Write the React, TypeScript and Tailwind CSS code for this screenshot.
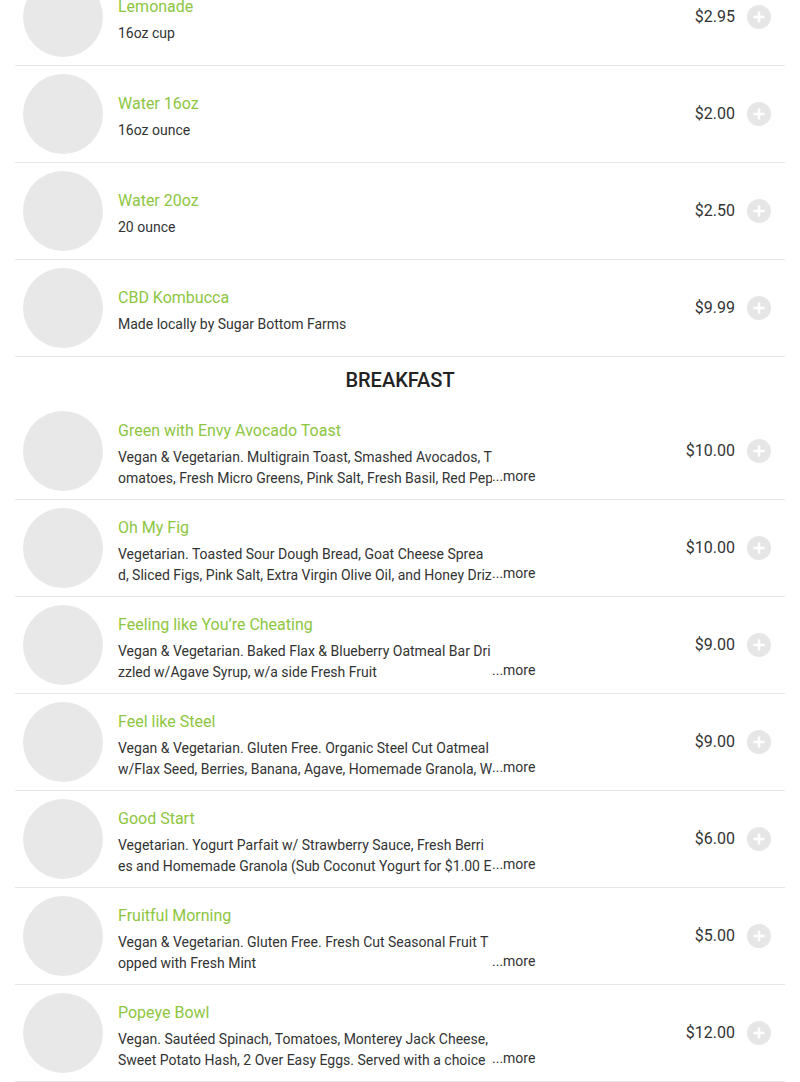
import React from "react";

type Item = { name: string; lines: string[]; price: string; more?: boolean };

const drinks: Item[] = [
  { name: "Lemonade", lines: ["16oz cup"], price: "$2.95" },
  { name: "Water 16oz", lines: ["16oz ounce"], price: "$2.00" },
  { name: "Water 20oz", lines: ["20 ounce"], price: "$2.50" },
  { name: "CBD Kombucca", lines: ["Made locally by Sugar Bottom Farms"], price: "$9.99" },
];

const breakfast: Item[] = [
  {
    name: "Green with Envy Avocado Toast",
    lines: [
      "Vegan & Vegetarian. Multigrain Toast, Smashed Avocados, T",
      "omatoes, Fresh Micro Greens, Pink Salt, Fresh Basil, Red Pep",
    ],
    price: "$10.00",
    more: true,
  },
  {
    name: "Oh My Fig",
    lines: [
      "Vegetarian. Toasted Sour Dough Bread, Goat Cheese Sprea",
      "d, Sliced Figs, Pink Salt, Extra Virgin Olive Oil, and Honey Driz",
    ],
    price: "$10.00",
    more: true,
  },
  {
    name: "Feeling like You\u2019re Cheating",
    lines: [
      "Vegan & Vegetarian. Baked Flax & Blueberry Oatmeal Bar Dri",
      "zzled w/Agave Syrup, w/a side Fresh Fruit",
    ],
    price: "$9.00",
    more: true,
  },
  {
    name: "Feel like Steel",
    lines: [
      "Vegan & Vegetarian. Gluten Free. Organic Steel Cut Oatmeal",
      "w/Flax Seed, Berries, Banana, Agave, Homemade Granola, W",
    ],
    price: "$9.00",
    more: true,
  },
  {
    name: "Good Start",
    lines: [
      "Vegetarian. Yogurt Parfait w/ Strawberry Sauce, Fresh Berri",
      "es and Homemade Granola (Sub Coconut Yogurt for $1.00 E",
    ],
    price: "$6.00",
    more: true,
  },
  {
    name: "Fruitful Morning",
    lines: [
      "Vegan & Vegetarian. Gluten Free. Fresh Cut Seasonal Fruit T",
      "opped with Fresh Mint",
    ],
    price: "$5.00",
    more: true,
  },
  {
    name: "Popeye Bowl",
    lines: [
      "Vegan. Saut\u00e9ed Spinach, Tomatoes, Monterey Jack Cheese,",
      "Sweet Potato Hash, 2 Over Easy Eggs. Served with a choice",
    ],
    price: "$12.00",
    more: true,
  },
];

function PlusButton() {
  return (
    <div className="w-[24px] h-[24px] rounded-full bg-[#e6e6e6] flex items-center justify-center">
      <svg width="14" height="14" viewBox="0 0 14 14">
        <path d="M7 1.5v11M1.5 7h11" stroke="#ffffff" strokeWidth="2.4" strokeLinecap="butt" />
      </svg>
    </div>
  );
}

function Row({ item }: { item: Item }) {
  return (
    <div className="flex items-center h-[97px] border-b border-[#e6e6e6] pl-[8px] pr-[14px]">
      <div className="w-[80px] h-[80px] rounded-full bg-[#e8e8e8] shrink-0" />
      <div className={"ml-[15px] self-stretch flex flex-col " + (item.more ? "pt-[18px]" : "pt-[28px]")}>
        <div className="text-[16px] leading-[20px] text-[#8dc63f]">{item.name}</div>
        {item.more ? (
          <div className="flex items-end mt-[6px]">
            <div className="w-[374px] overflow-hidden text-[14px] leading-[21px] text-[#333333]">
              {item.lines.map((l, i) => (
                <div key={i} className="whitespace-nowrap">
                  {l}
                </div>
              ))}
            </div>
            <span className="mb-[2px] text-[14px] leading-[21px] text-[#333333] whitespace-nowrap">...more</span>
          </div>
        ) : (
          <div className="mt-[6px] text-[14px] leading-[21px] text-[#333333]">{item.lines[0]}</div>
        )}
      </div>
      <div className="ml-auto flex items-center">
        <span className="text-[16px] leading-[20px] text-[#333333]">{item.price}</span>
        <div className="ml-[12px]">
          <PlusButton />
        </div>
      </div>
    </div>
  );
}

export default function App() {
  return (
    <div className="bg-white w-[800px] h-[1082px] overflow-hidden" style={{ fontFamily: "Roboto, 'Noto Sans', sans-serif" }}>
      <div className="px-[15px] -mt-[31px]">
        {drinks.map((d) => (
          <Row key={d.name} item={d} />
        ))}
        <div className="h-[46px] flex items-center justify-center text-[20px] font-medium text-[#222222]">BREAKFAST</div>
        {breakfast.map((d) => (
          <Row key={d.name} item={d} />
        ))}
      </div>
    </div>
  );
}
